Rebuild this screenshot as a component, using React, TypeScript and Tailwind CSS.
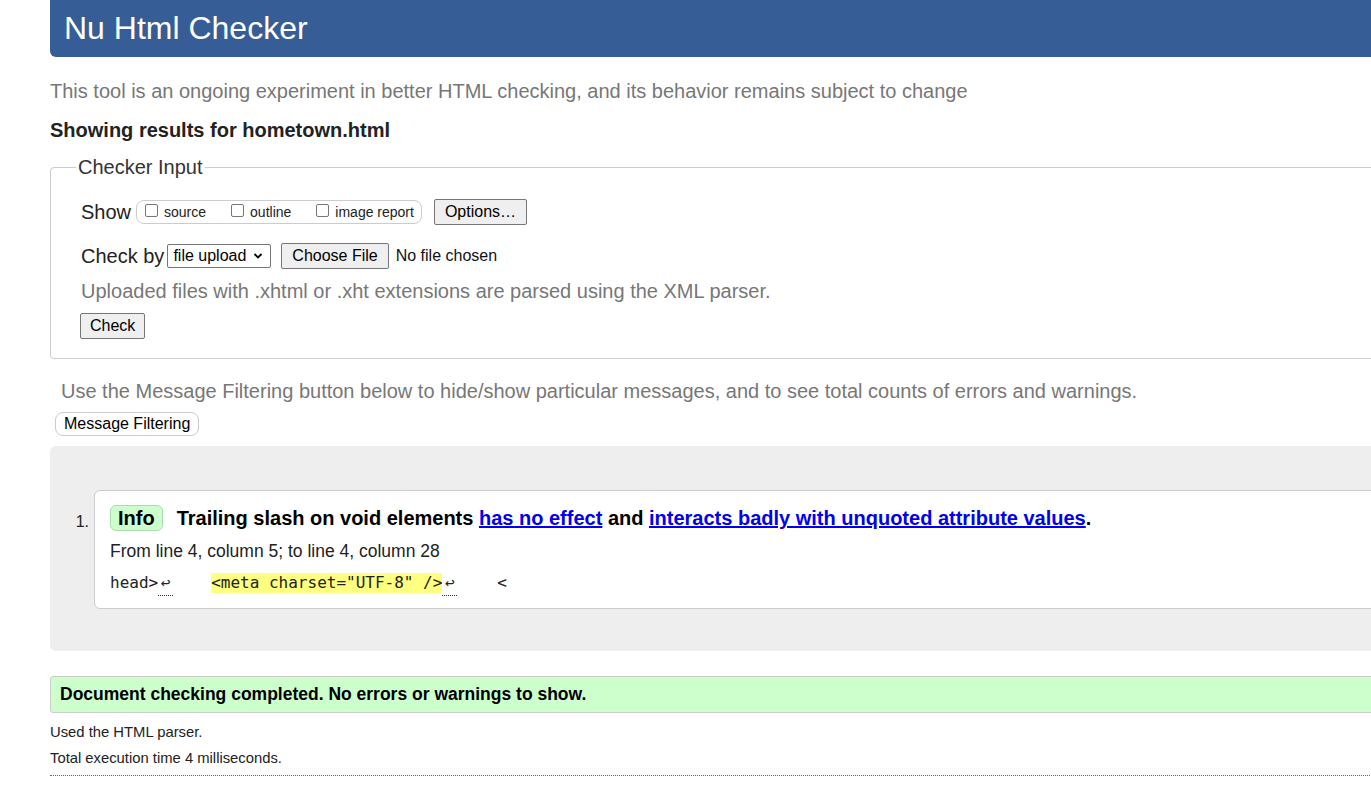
import React from "react";

const sans = { fontFamily: '"Liberation Sans", Arial, sans-serif' };

function Btn({ children, className = "" }: { children: React.ReactNode; className?: string }) {
  return (
    <span
      className={
        "inline-flex items-center justify-center border border-[#767676] bg-[#efefef] rounded-[2px] text-black " +
        className
      }
    >
      {children}
    </span>
  );
}

function CB({ label }: { label: string }) {
  return (
    <span className="inline-flex items-center">
      <span className="inline-block w-[13px] h-[13px] border border-[#767676] rounded-[2px] bg-white mr-[6px] mb-[3px]" />
      <span className="text-[14px] text-[#222]">{label}</span>
    </span>
  );
}

function Ret() {
  return (
    <span className="relative inline-block w-[15px] text-center">
      <span>↩</span>
      <span className="absolute left-0 right-0 bottom-[-3px] border-b border-dotted border-[#333]" />
    </span>
  );
}

export default function App() {
  return (
    <div className="w-full overflow-hidden bg-white min-h-[788px]" style={sans}>
      <div className="ml-[50px] w-[1400px]">
        <div className="h-[57px] bg-[#365d95] rounded-bl-[6px] pl-[14px] flex items-center">
          <h1 className="text-white text-[32px] leading-none mt-[-2px]">Nu Html Checker</h1>
        </div>

        <p className="mt-[22px] text-[20px] leading-[24px] text-[#777]">
          This tool is an ongoing experiment in better HTML checking, and its behavior remains subject to change
        </p>
        <p className="mt-[15px] text-[20px] leading-[24px] font-bold text-[#222]">
          Showing results for hometown.html
        </p>

        <fieldset className="mt-[13px] border border-[#ccc] rounded-[4px] pl-[30px] pr-0 pt-[18px] pb-[19px]">
          <legend className="ml-[-5px] px-[2px] text-[20px] leading-[24px] text-[#333]">Checker Input</legend>
          <div className="flex items-center h-[26px] mt-[2px]">
            <span className="text-[20px] text-[#222]">Show</span>
            <span className="ml-[5px] inline-flex items-center h-[24px] border border-[#ccc] rounded-[8px] pl-[8px] pr-[7px] gap-[25px]">
              <CB label="source" />
              <CB label="outline" />
              <CB label="image report" />
            </span>
            <Btn className="ml-[12px] h-[26px] px-[10px] text-[16px]">Options…</Btn>
          </div>
          <div className="flex items-center h-[26px] mt-[18px]">
            <span className="text-[20px] text-[#222]">Check by</span>
            <span className="ml-[3px] inline-flex items-center h-[24px] border border-[#767676] rounded-[2px] bg-white pl-[5px] pr-[7px] text-[16px] text-black">
              file upload
              <svg width="10" height="8" viewBox="0 0 10 8" className="ml-[7px]">
                <path d="M1.5 2 L5 5.5 L8.5 2" fill="none" stroke="#000" strokeWidth="1.8" />
              </svg>
            </span>
            <Btn className="ml-[10px] h-[26px] px-[10px] text-[16px]">Choose File</Btn>
            <span className="ml-[7px] text-[16px] text-[#111]">No file chosen</span>
          </div>
          <p className="mt-[10px] text-[20px] leading-[24px] text-[#777]">
            Uploaded files with .xhtml or .xht extensions are parsed using the XML parser.
          </p>
          <Btn className="mt-[10px] h-[26px] px-[9px] text-[16px] ml-[-1px]">Check</Btn>
        </fieldset>

        <p className="mt-[20px] ml-[11px] text-[20px] leading-[24px] text-[#777]">
          Use the Message Filtering button below to hide/show particular messages, and to see total counts of errors and warnings.
        </p>
        <div className="mt-[9px] ml-[5px]">
          <span className="inline-flex items-center h-[24px] px-[8px] border border-[#ccc] rounded-[8px] bg-white text-[16px] text-black">
            Message Filtering
          </span>
        </div>

        <div className="mt-[10px] bg-[#eee] rounded-[6px] pt-[44px] pb-[42px] pl-[44px]">
          <div className="flex">
            <span className="w-0 relative">
              <span className="absolute right-[5px] top-[20px] text-[16px] text-[#222]">1.</span>
            </span>
            <div className="flex-1 bg-white border border-[#ccc] rounded-[6px] pl-[15px] pt-[14px] pb-[15px]">
              <div className="flex items-center text-[20px] leading-[24px]">
                <span className="inline-flex items-center h-[26px] px-[7px] bg-[#ccffcc] border border-[#aaddaa] rounded-[6px] font-bold text-black">
                  Info
                </span>
                <span className="ml-[14px] font-bold text-black">
                  Trailing slash on void elements{" "}
                  <a className="text-[#0000ee] underline">has no effect</a> and{" "}
                  <a className="text-[#0000ee] underline">interacts badly with unquoted attribute values</a>.
                </span>
              </div>
              <p className="mt-[10px] text-[17.5px] leading-[21px] text-[#222]">
                From line 4, column 5; to line 4, column 28
              </p>
              <div
                className="mt-[11px] text-[16px] leading-[20px] text-[#222] whitespace-pre flex items-center"
                style={{ fontFamily: '"DejaVu Sans Mono", "Liberation Mono", monospace' }}
              >
                <span>head&gt;</span>
                <Ret />
                <span className="inline-block w-[38px]" />
                <span className="bg-[#ffff80]">{'<meta charset="UTF-8" />'}</span>
                <Ret />
                <span className="inline-block w-[40px]" />
                <span>&lt;</span>
              </div>
            </div>
          </div>
        </div>

        <div className="mt-[25px] h-[37px] bg-[#ccffcc] border border-[#ccc] rounded-[3px] flex items-center pl-[9px]">
          <span className="text-[17.5px] font-bold text-black">Document checking completed. No errors or warnings to show.</span>
        </div>
        <p className="mt-[10px] text-[14.8px] leading-[18px] text-[#222]">Used the HTML parser.</p>
        <p className="mt-[8px] text-[14.8px] leading-[18px] text-[#222]">Total execution time 4 milliseconds.</p>
        <div className="mt-[8px] border-b border-dotted border-[#666]" />
      </div>
    </div>
  );
}
